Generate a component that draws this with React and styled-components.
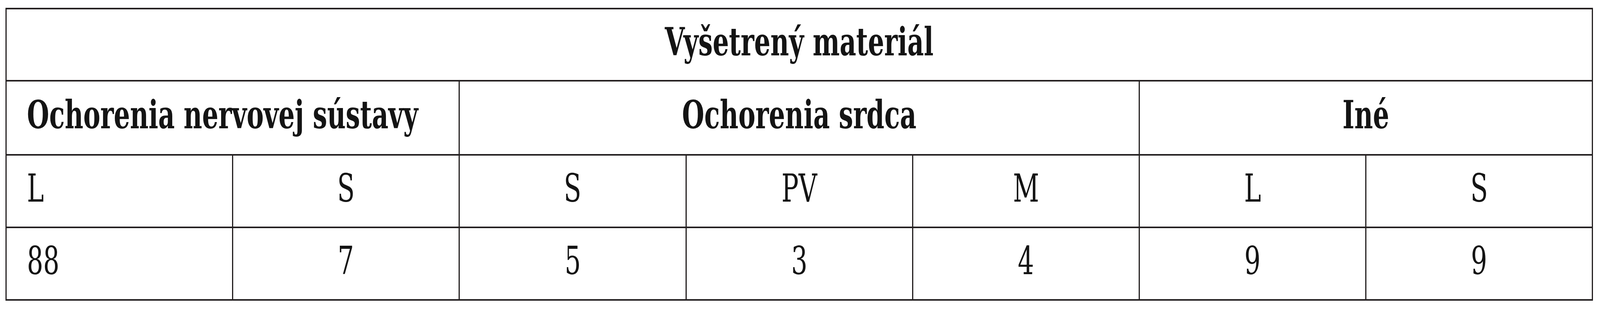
import React, { useEffect, useState } from "react";
import styled, { createGlobalStyle } from "styled-components";

/* Reference frame is 5586px wide; horizontal measures are expressed
   as fractions of the viewport width so the table fills the frame. */
const W = 5586;
const vw = (px) => `${((px / W) * 100).toFixed(4)}vw`;

const Global = createGlobalStyle`
  html, body { margin: 0; padding: 0; background: #ffffff; }
  body { height: 800px; overflow: hidden; }
`;

const Page = styled.div`
  padding: 20px 0 0 ${vw(19)};
`;

const Table = styled.div`
  width: ${vw(5543)};
  display: grid;
  grid-template-columns: repeat(7, 1fr);
  grid-template-rows: 185px 190px 186px 186px;
  border-top: 4px solid #231f20;
  border-left: ${vw(4.5)} solid #231f20;
  box-sizing: border-box;
  font-family: "DejaVu Serif Condensed", "DejaVu Serif", "Liberation Serif", serif;
  font-stretch: condensed;
  font-size: 99px;
  color: #141414;
`;

const Cell = styled.div`
  grid-column: span ${(p) => p.$span || 1};
  box-sizing: border-box;
  min-width: 0;
  border-bottom: 4px solid #231f20;
  border-right: ${vw(4.5)} solid #231f20;
  display: flex;
  align-items: center;
  justify-content: ${(p) => (p.$left ? "flex-start" : "center")};
  padding: 0 0 16px ${(p) => (p.$left ? vw(71) : "0")};
  font-weight: ${(p) => (p.$bold ? 700 : 400)};
  white-space: nowrap;
  line-height: normal;
`;

const Label = styled.span`
  display: inline-block;
  flex: none;
  transform-origin: ${(p) => (p.$left ? "left center" : "center center")};
`;

const groups = [
  { label: "Ochorenia nervovej sústavy", span: 2, left: true },
  { label: "Ochorenia srdca", span: 3 },
  { label: "Iné", span: 2 },
];

const codes = ["L", "S", "S", "PV", "M", "L", "S"];
const values = ["88", "7", "5", "3", "4", "9", "9"];

const readScale = () =>
  typeof window === "undefined" ? 1 : window.innerWidth / W;

export default function App() {
  const [k, setK] = useState(readScale);

  useEffect(() => {
    const onResize = () => setK(readScale());
    window.addEventListener("resize", onResize);
    return () => window.removeEventListener("resize", onResize);
  }, []);

  const text = (t, left) => (
    <Label $left={left} style={{ transform: `scaleX(${k})` }}>
      {t}
    </Label>
  );

  return (
    <Page>
      <Global />
      <Table>
        <Cell $span={7} $bold>
          {text("Vyšetrený materiál")}
        </Cell>
        {groups.map((g) => (
          <Cell key={g.label} $span={g.span} $bold $left={g.left}>
            {text(g.label, g.left)}
          </Cell>
        ))}
        {codes.map((c, i) => (
          <Cell key={"c" + i} $left={i === 0}>
            {text(c, i === 0)}
          </Cell>
        ))}
        {values.map((v, i) => (
          <Cell key={"v" + i} $left={i === 0}>
            {text(v, i === 0)}
          </Cell>
        ))}
      </Table>
    </Page>
  );
}
